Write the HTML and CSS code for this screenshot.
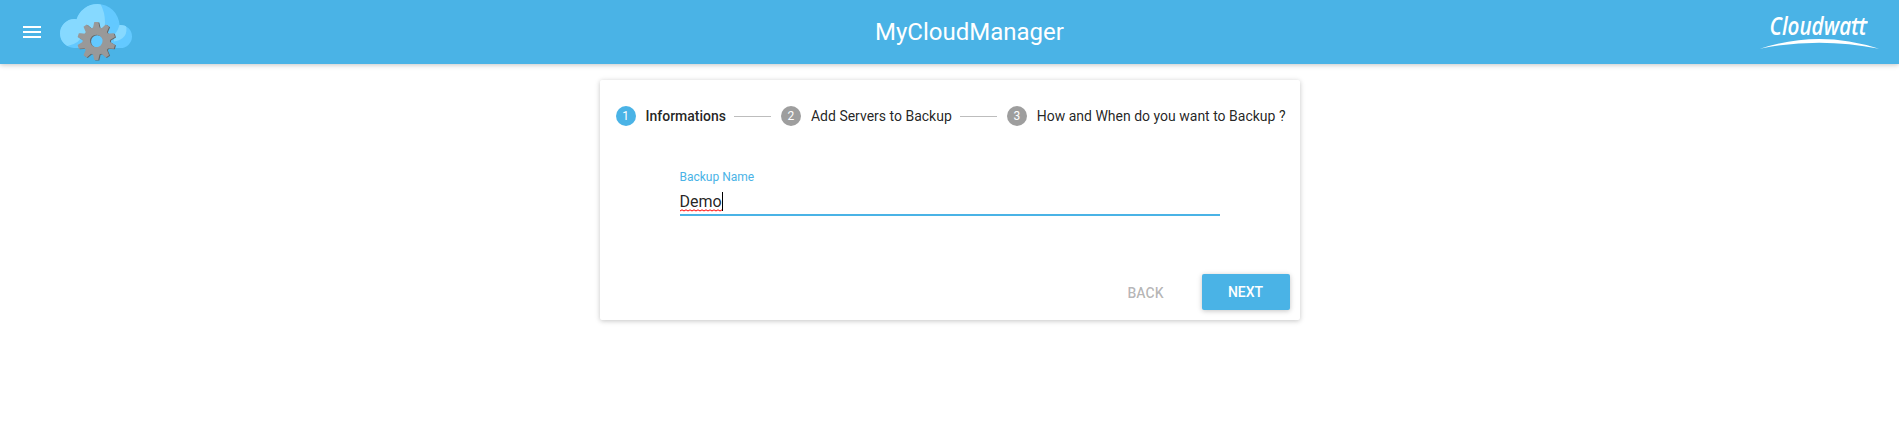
FILE: index.html
```html
<!DOCTYPE html>
<html lang="en">
<head>
<meta charset="utf-8">
<title>MyCloudManager</title>
<link rel="stylesheet" href="styles.css">
</head>
<body>
<header class="appbar">
  <div class="brand">
    <svg class="menu" viewBox="0 0 24 24"><path d="M3 18h18v-2H3v2zm0-5h18v-2H3v2zm0-7v2h18V6H3z"/></svg>
    <svg class="cloud" viewBox="0 0 72 64">
      <defs>
        <clipPath id="shape"><circle cx="14.500" cy="33.500" r="14.500"/><circle cx="37.500" cy="26" r="22"/><circle cx="60.500" cy="36.500" r="11.500"/><rect x="14" y="30" width="46.500" height="18"/></clipPath>
        <path id="tooth" d="M-3.600-12L-2-19H2L3.600-12Z"/>
        <g id="gear">
          <circle r="10" fill="none" stroke="currentColor" stroke-width="7.500"/>
          <g fill="currentColor">
            <use href="#tooth"/><use href="#tooth" transform="rotate(36)"/><use href="#tooth" transform="rotate(72)"/><use href="#tooth" transform="rotate(108)"/><use href="#tooth" transform="rotate(144)"/><use href="#tooth" transform="rotate(180)"/><use href="#tooth" transform="rotate(216)"/><use href="#tooth" transform="rotate(252)"/><use href="#tooth" transform="rotate(288)"/><use href="#tooth" transform="rotate(324)"/>
          </g>
        </g>
      </defs>
      <g clip-path="url(#shape)">
        <rect width="72" height="64" fill="#63c9ff"/>
        <path d="M0 0H38Q45 10 45 22Q45 29 42 34L22 35Q20 43 9 45.500L0 48Z" fill="#86d9ff"/>
        <path d="M54 25H66Q69 39 54 41.500Z" fill="#86d9ff"/>
        <path d="M54 24L60 22Q59 30 54 35Z" fill="#63c9ff"/>
      </g>
      <use class="gear-edge" href="#gear" x="37.300" y="41.500"/>
      <use class="gear-face" href="#gear" x="36.300" y="41"/>
    </svg>
  </div>
  <h1 class="title">MyCloudManager</h1>
  <svg class="cloudwatt" viewBox="0 0 139 64">
    <text class="wordmark" transform="translate(9.500 34.800)" textLength="97" lengthAdjust="spacingAndGlyphs">Cloudwatt</text>
    <path d="M92 21.300H108L107.600 23.500H91.600Z" fill="#fff"/>
    <path d="M0 48.800Q59 29.200 119 48.800Q59 36.500 0 48.800Z" fill="#fff"/>
  </svg>
</header>
<main class="card">
  <ol class="steps">
    <li class="step active"><span class="dot">1</span>Informations</li>
    <li class="line"></li>
    <li class="step"><span class="dot">2</span>Add Servers to Backup</li>
    <li class="line"></li>
    <li class="step"><span class="dot">3</span>How and When do you want to Backup ?</li>
  </ol>
  <div class="field">
    <div class="label">Backup Name</div>
    <div class="input">
      <div class="entry"><span>Demo</span>
        <svg class="squiggle" viewBox="0 0 42 3"><path d="M0 2L2 .8L4 2L6 .8L8 2L10 .8L12 2L14 .8L16 2L18 .8L20 2L22 .8L24 2L26 .8L28 2L30 .8L32 2L34 .8L36 2L38 .8L40 2L42 .8"/></svg>
      </div><span class="caret"></span>
    </div>
  </div>
  <div class="actions">
    <button class="btn back">BACK</button>
    <button class="btn next">NEXT</button>
  </div>
</main>
</body>
</html>
```
FILE: styles.css
```css
* { box-sizing: border-box; }
body { margin: 0; min-height: 100vh; background: #fff; font-family: Roboto, sans-serif; color: rgba(0,0,0,.87); }
.appbar { display: flex; align-items: center; height: 64px; background: #4ab3e6; box-shadow: 0 1px 6px rgba(0,0,0,.12), 0 1px 4px rgba(0,0,0,.12); }
.brand { display: flex; align-items: center; width: 179px; height: 64px; }
.menu { width: 24px; height: 24px; margin-left: 20px; fill: #fff; }
.cloud { width: 72px; height: 64px; margin-left: 16px; }
.gear-edge { color: #666; }
.gear-face { color: #999; }
.title { flex: 1; margin: 0; text-align: center; font-size: 24px; line-height: 64px; font-weight: 400; color: #fff; }
.cloudwatt { width: 139px; height: 64px; }
.wordmark { font: italic 600 25px "Open Sans", sans-serif; fill: #fff; }
.card { width: 700px; height: 240px; margin: 16px auto 0; display: flex; flex-direction: column; border-radius: 2px; background: #fff; box-shadow: 0 1px 6px rgba(0,0,0,.12), 0 1px 4px rgba(0,0,0,.12); }
.steps { display: flex; align-items: center; height: 72px; margin: 0; padding: 0 14px 0 16px; list-style: none; font-size: 14px; white-space: nowrap; }
.step { display: flex; align-items: center; gap: 10px; }
.active { font-weight: 500; }
.dot { width: 20px; height: 20px; border-radius: 50%; background: #9e9e9e; color: #fff; font-size: 12px; font-weight: 400; line-height: 20px; text-align: center; }
.active .dot { background: #4ab3e6; }
.line { flex: 1; height: 1px; margin: 1px 10px 0 8px; background: #bdbdbd; }
.field { width: 540px; margin: 17px 0 0 80px; }
.label { font-size: 12px; line-height: 16px; color: #4ab3e6; }
.input { display: flex; align-items: center; height: 31px; border-bottom: 2px solid #4ab3e6; font-size: 16px; padding-top: 4px; }
.entry { position: relative; line-height: 19px; }
.squiggle { position: absolute; left: 0; bottom: -1px; width: 42px; height: 3px; fill: none; stroke: #f00; stroke-width: 1; }
.caret { width: 1px; height: 19px; background: #000; }
.actions { display: flex; justify-content: flex-end; margin: auto 10px 10px 0; gap: 12px; }
.btn { width: 88px; height: 36px; padding: 0; border: 0; border-radius: 2px; font: 500 14px Roboto, sans-serif; }
.back { padding-top: 1px; background: none; color: rgba(0,0,0,.3); }
.next { background: #4ab3e6; color: #fff; box-shadow: 0 1px 6px rgba(0,0,0,.12), 0 1px 4px rgba(0,0,0,.12); }
```
